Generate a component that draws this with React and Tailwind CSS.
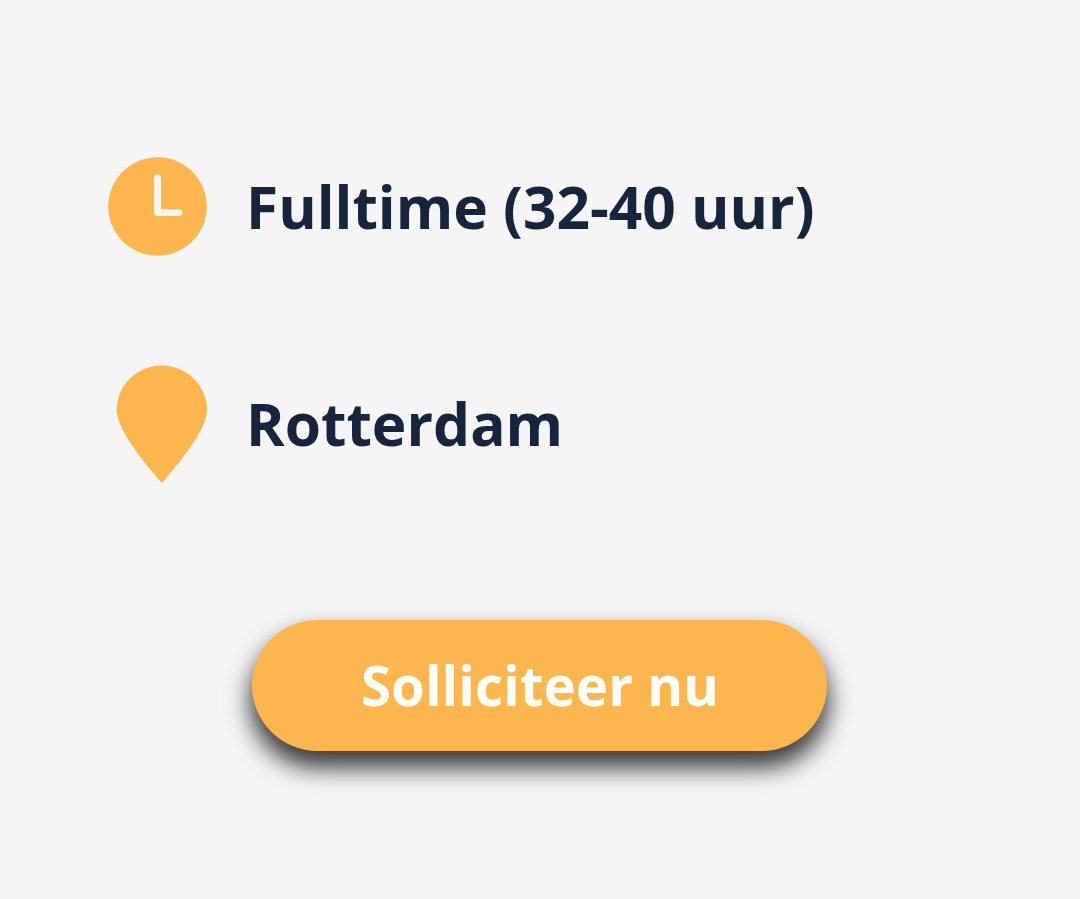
import React from 'react'

const ClockIcon = () => (
  <svg className="w-[99px] h-[99px]" viewBox="0 0 99 99" fill="none">
    <circle cx="49.5" cy="49.5" r="49.3" fill="#fdb64d" />
    <path d="M49.5 21v34.6H71" stroke="#f5f5f3" strokeWidth="6.8" strokeLinecap="round" strokeLinejoin="round" />
  </svg>
)

const PinIcon = () => (
  <svg className="w-[91px] h-[118px]" viewBox="0 0 91 118">
    <path
      d="M45.7 .5C20.5 .5 .7 20.7 .7 45C.7 65 29.5 99.5 45.7 118C62 99.5 91 65 91 45C91 20.7 70.9 .5 45.7 .5Z"
      fill="#fdb64d"
    />
  </svg>
)

const DetailRow = ({ icon, label, className }) => (
  <div className={`flex items-center ${className}`}>
    <div className="w-[99px] flex justify-end shrink-0">{icon}</div>
    <p className="ml-[39px] pb-[2px] text-[58.6px] leading-[82px] font-bold whitespace-nowrap text-[#17243d]">
      {label}
    </p>
  </div>
)

const App = () => {
  return (
    <div className="w-full h-[899px] overflow-hidden bg-[#f4f5f4] pt-[157px] font-['Open_Sans',sans-serif]">
      <div className="pl-[108px]">
        <DetailRow icon={<ClockIcon />} label="Fulltime (32-40 uur)" className="h-[99px]" />
        <DetailRow icon={<PinIcon />} label="Rotterdam" className="h-[118px] mt-[109px]" />
      </div>

      <button className="block ml-[252px] mt-[137px] w-[575px] h-[131px] pl-[1px] rounded-full bg-[#fdb64d] text-[54.7px] font-bold text-[#fffdf7] shadow-[0_15px_23px_2px_#3c3c3c]">
        Solliciteer nu
      </button>
    </div>
  )
}

export default App
